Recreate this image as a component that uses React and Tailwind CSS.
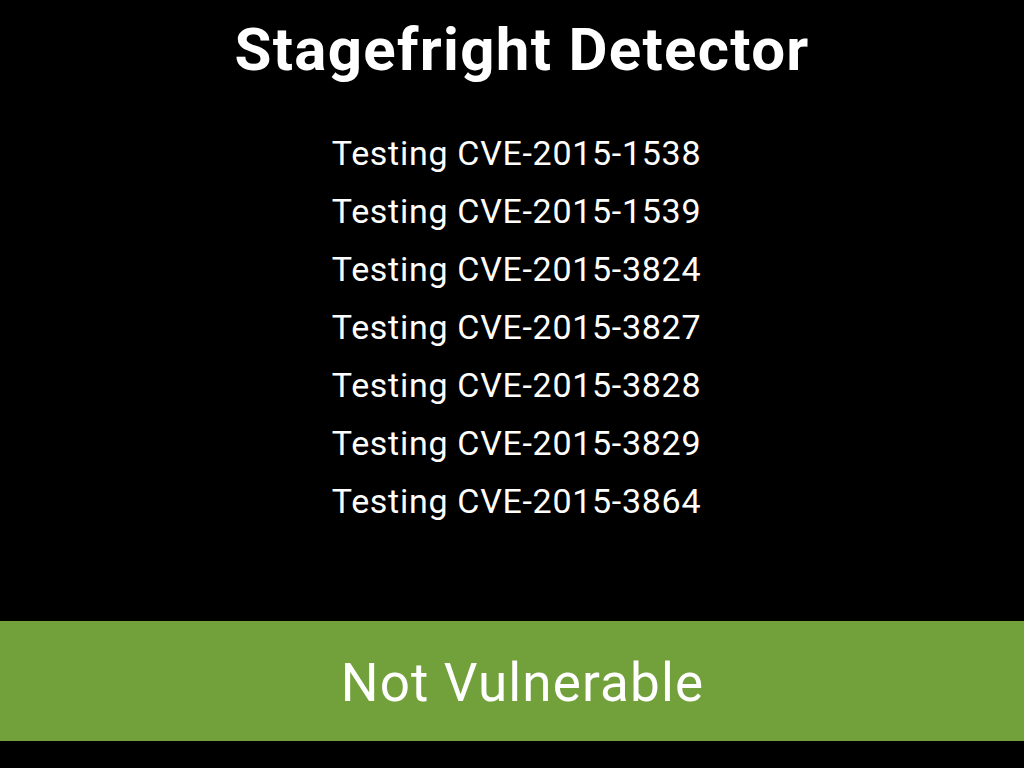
export default function App() {
  return (
    <div className="w-[1024px] h-[768px] bg-black flex flex-col text-white overflow-hidden" style={{ fontFamily: "Roboto, 'Liberation Sans', sans-serif" }}>
      <h1 className="text-center font-bold text-[60px] leading-[64px] tracking-[1.3px] mt-[18px] pl-[20px]">Stagefright Detector</h1>
      <div className="flex flex-col items-center mt-[42px] pl-[9px] text-[34px] leading-[58px] tracking-[0.7px]">
        {["1538", "1539", "3824", "3827", "3828", "3829", "3864"].map((n) => (
          <div key={n}>Testing CVE-2015-{n}</div>
        ))}
      </div>
      <div className="mt-auto mb-[27px] h-[120px] bg-[#72a03a] flex items-center justify-center pt-[6px] pl-[21px] text-[53px] tracking-[1.15px]">Not Vulnerable</div>
    </div>
  );
}
